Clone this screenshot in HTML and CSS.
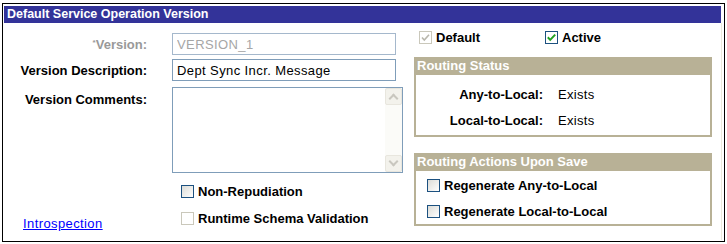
FILE: index.html
```html
<!DOCTYPE html>
<html lang="en">
<head>
  <meta charset="UTF-8">
  <title>Default Service Operation Version</title>
  <link rel="stylesheet" href="styles.css">
</head>
<body>

  <div class="frame">
    <div class="panel">
      <div class="title">Default Service Operation Version</div>

      <div class="content">
        <div class="left">
          <div class="row row-version">
            <label class="lbl lbl-muted"><span class="req">*</span>Version:</label>
            <input class="txt txt-disabled" type="text" value="VERSION_1" disabled>
          </div>
          <div class="row row-desc">
            <label class="lbl">Version Description:</label>
            <input class="txt" type="text" value="Dept Sync Incr. Message">
          </div>
          <div class="row row-comments">
            <label class="lbl lbl-top">Version Comments:</label>
            <div class="memo">
              <div class="memo-text"></div>
              <div class="scroll">
                <div class="scroll-btn"><span class="chev chev-up"></span></div>
                <div class="scroll-track"></div>
                <div class="scroll-btn"><span class="chev chev-down"></span></div>
              </div>
            </div>
          </div>
          <div class="row row-check row-nonrep">
            <span class="lbl"></span>
            <span class="check">
              <span class="box"></span>
              <span class="check-text">Non-Repudiation</span>
            </span>
          </div>
          <div class="row row-check row-runtime">
            <a class="link" href="#">Introspection</a>
            <span class="check">
              <span class="box box-disabled"></span>
              <span class="check-text">Runtime Schema Validation</span>
            </span>
          </div>
        </div>

        <div class="right">
          <div class="flags">
            <span class="check flag-default">
              <span class="box box-disabled">
                <svg viewBox="0 0 13 13" width="13" height="13"><path d="M3 6.5 L5.3 9 L10 3.8" fill="none" stroke="#b9b7ad" stroke-width="1.6"/></svg>
              </span>
              <span class="check-text">Default</span>
            </span>
            <span class="check">
              <span class="box box-on">
                <svg viewBox="0 0 13 13" width="13" height="13"><path d="M2.8 6.3 L5.2 8.9 L10.2 3.6" fill="none" stroke="#21a121" stroke-width="2"/></svg>
              </span>
              <span class="check-text">Active</span>
            </span>
          </div>

          <div class="group group-status">
            <div class="group-head">Routing Status</div>
            <div class="group-body">
              <div class="status-row">
                <span class="status-lbl">Any-to-Local:</span>
                <span class="status-val">Exists</span>
              </div>
              <div class="status-row">
                <span class="status-lbl">Local-to-Local:</span>
                <span class="status-val">Exists</span>
              </div>
            </div>
          </div>

          <div class="group group-actions">
            <div class="group-head">Routing Actions Upon Save</div>
            <div class="group-body">
              <div class="action-row">
                <span class="check">
                  <span class="box"></span>
                  <span class="check-text">Regenerate Any-to-Local</span>
                </span>
              </div>
              <div class="action-row">
                <span class="check">
                  <span class="box"></span>
                  <span class="check-text">Regenerate Local-to-Local</span>
                </span>
              </div>
            </div>
          </div>
        </div>
      </div>
    </div>
  </div>

</body>
</html>
```

FILE: styles.css
```css
body {
  margin: 0;
  font-family: "Liberation Sans", Arial, sans-serif;
  font-size: 13px;
  color: #000;
  background-color: #fff;
}

.frame {
  margin: 3px 0 0 2px;
  width: 720px;
  height: 235px;
  border: 1px solid #000;
  padding: 1px 0 1px 1px;
}

.panel {
  width: 718px;
  height: 235px;
  display: flex;
  flex-direction: column;
}

.title {
  margin-top: 1px;
  margin-right: 1px;
  height: 17px;
  line-height: 17px;
  padding-left: 3px;
  background-color: #333399;
  color: #fff;
  font-weight: bold;
  font-size: 12.5px;
  flex-shrink: 0;
}

.content {
  flex: 1;
  display: flex;
  border-right: 1px solid #ece9dc;
}

/* left side: labels and fields */
.left {
  width: 410px;
  display: flex;
  flex-direction: column;
}

.row {
  display: flex;
  align-items: center;
}

.lbl {
  width: 143px;
  margin-right: 25px;
  text-align: right;
  font-weight: bold;
  flex-shrink: 0;
}

.lbl-muted {
  color: #999;
}

.req {
  font-size: 8px;
  vertical-align: 4px;
}

.lbl-top {
  align-self: flex-start;
  padding-top: 5px;
}

.row-version { margin-top: 10px; }
.row-desc { margin-top: 4px; }
.row-comments { margin-top: 6px; }
.row-nonrep { margin-top: 12px; }
.row-runtime { margin-top: 14px; }

.txt {
  box-sizing: border-box;
  width: 224px;
  height: 22px;
  margin: 0;
  padding: 0 4px;
  border: 1px solid #7f9db9;
  font-family: "Liberation Sans", Arial, sans-serif;
  font-size: 13px;
  letter-spacing: 0.4px;
  color: #000;
  background: #fff;
  outline: none;
}

.txt-disabled {
  color: #a6a6a6;
  border-color: #a5b8cc;
}

.memo {
  box-sizing: border-box;
  width: 231px;
  height: 86px;
  border: 1px solid #7f9db9;
  display: flex;
}

.memo-text {
  flex: 1;
}

.scroll {
  width: 17px;
  display: flex;
  flex-direction: column;
  background: #fbfbf8;
}

.scroll-track {
  flex: 1;
}

.scroll-btn {
  height: 17px;
  box-sizing: border-box;
  border: 1px solid #e8e6de;
  border-radius: 2px;
  background: #f3f2ec;
  display: flex;
  align-items: center;
  justify-content: center;
}

.chev {
  width: 5px;
  height: 5px;
  border-left: 2px solid #c9c7bf;
  border-top: 2px solid #c9c7bf;
}

.chev-up {
  transform: translateY(2px) rotate(45deg);
}

.chev-down {
  transform: translateY(-2px) rotate(225deg);
}

/* checkboxes */
.row-check {
  height: 13px;
}

.row-check .lbl {
  margin-right: 34px;
}

.check {
  display: inline-flex;
  align-items: center;
  height: 13px;
}

.box {
  box-sizing: border-box;
  width: 13px;
  height: 13px;
  border: 1px solid #1c5180;
  background: linear-gradient(135deg, #dcdcd7 0%, #f4f4f2 70%, #fff 100%);
  margin-right: 4px;
  display: inline-flex;
}

.box svg {
  display: block;
  margin: -1px;
}

.box-disabled {
  border-color: #cac8bb;
  background: #fff;
}

.box-on {
  background: #fff;
}

.check-text {
  font-weight: bold;
}

.link {
  width: 124px;
  margin-right: 34px;
  padding-left: 19px;
  align-self: flex-end;
  margin-bottom: -6px;
  color: #0000ff;
  text-decoration: underline;
  font-weight: normal;
  letter-spacing: 0.4px;
}

/* right side */
.right {
  width: 298px;
  display: flex;
  flex-direction: column;
}

.flags {
  margin-top: 7px;
  height: 14px;
  padding-left: 5px;
  display: flex;
  align-items: center;
}

.flag-default {
  width: 126px;
}

.group {
  box-sizing: border-box;
  border: 2px solid #b8b196;
  border-top: 0;
}

.group-status {
  margin-top: 13px;
  height: 80px;
}

.group-actions {
  margin-top: 16px;
  height: 73px;
}

.group-head {
  height: 18px;
  line-height: 18px;
  background-color: #b8b196;
  color: #fff;
  font-weight: bold;
  padding-left: 1px;
}

.group-body {
  display: flex;
  flex-direction: column;
}

.status-row {
  display: flex;
  align-items: center;
  height: 26px;
}

.group-status .group-body {
  padding-top: 6px;
}

.status-lbl {
  width: 127px;
  text-align: right;
  font-weight: bold;
}

.status-val {
  margin-left: 15px;
  letter-spacing: 0.3px;
}

.group-actions .group-body {
  padding-top: 1px;
  padding-left: 11px;
}

.action-row {
  height: 26px;
  display: flex;
  align-items: center;
}
```
